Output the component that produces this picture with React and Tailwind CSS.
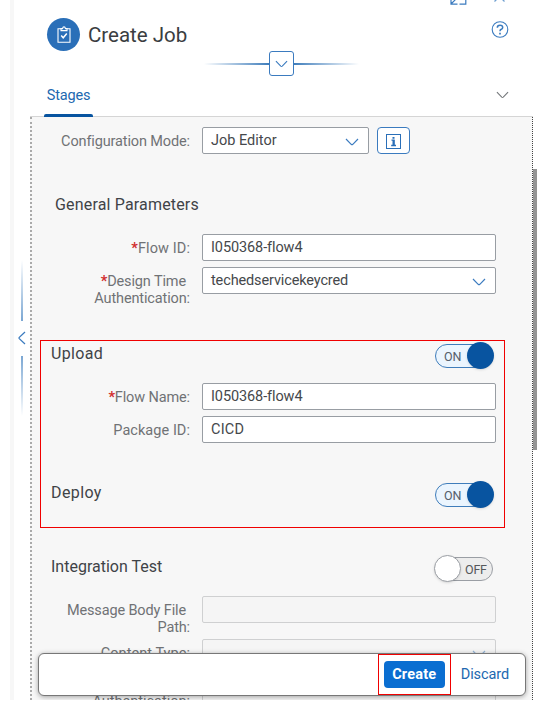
import React from "react";

function Chevron({ className = "" }) {
  return (
    <svg viewBox="0 0 14 8" fill="none" stroke="currentColor" strokeWidth="1.2" className={className}>
      <path d="M1 1 L6.2 6.3 Q7 7 7.8 6.3 L13 1" />
    </svg>
  );
}

function Field({ value = "", select, disabled, valueClass = "", className = "w-[294px]" }) {
  return (
    <div
      className={`flex h-[27px] shrink-0 items-center justify-between rounded-[2px] border pl-[8px] pr-[9px] ${
        disabled ? "border-[#cfd0d1] bg-[#f5f5f5]" : "border-[#989da3] bg-white"
      } ${className}`}
    >
      <span className={`whitespace-nowrap pt-[2px] text-[14.5px] leading-none text-[#45484b] ${valueClass}`}>{value}</span>
      {select && <Chevron className={`mt-[2px] h-[8px] w-[14px] ${disabled ? "text-[#93b4d6]" : "text-[#3b7bbf]"}`} />}
    </div>
  );
}

function Row({ lines, required, className = "", labelClass = "tracking-[-0.13px]", children }) {
  return (
    <div className={`flex items-start ${className}`}>
      <div className={`mr-[12px] flex w-[160px] shrink-0 flex-col items-end pt-[6px] text-[14.5px] leading-[17px] text-[#707275] ${labelClass}`}>
        {lines.map((line, i) => (
          <span key={line} className={`whitespace-nowrap ${i < lines.length - 1 ? "mr-[4px]" : ""}`}>
            {required && i === 0 && <span className="font-bold text-[#d22f2f]">*</span>}
            {line}
          </span>
        ))}
      </div>
      {children}
    </div>
  );
}

function Toggle({ on }) {
  return on ? (
    <div className="relative mr-[3px] h-[24px] w-[58px] rounded-full border border-[#3f7dbb] bg-[#ebf5fe] pl-[8px] text-[12.5px] leading-[23px] text-[#55606b]">
      ON
      <span className="absolute -right-[2px] -top-[3px] size-[27px] rounded-full bg-[#0854a0] shadow-sm" />
    </div>
  ) : (
    <div className="relative mr-[3px] h-[24px] w-[58px] rounded-full border border-[#9a9ea4] bg-[#ededed] pl-[29px] text-[12.5px] leading-[23px] tracking-[-0.2px] text-[#55585b]">
      OFF
      <span className="absolute -left-[2px] -top-[3px] size-[27px] rounded-full border border-[#9a9ea4] bg-white shadow-sm" />
    </div>
  );
}

function Section({ title, on, titleClass = "", className = "" }) {
  return (
    <div className={`flex h-[28px] items-start justify-between pl-[21px] ${className}`}>
      <h2 className={`pt-[1px] text-[16px] leading-[22px] text-[#3f4347] ${titleClass}`}>{title}</h2>
      <div className="pt-[2px]">
        <Toggle on={on} />
      </div>
    </div>
  );
}

export default function App() {
  return (
    <div className="h-[716px] w-[558px] overflow-hidden bg-white font-['Roboto',sans-serif]">
      <div className="flex h-[700px] overflow-hidden pl-[10px]">
        <div className="w-[4px] shrink-0 bg-[#f7f7f7]" />
        <div className="flex w-[16px] shrink-0 flex-col items-center pt-[260px]">
          <div className="h-[61px] w-[2px] bg-gradient-to-b from-transparent to-[#7ba7d3]" />
          <svg viewBox="0 0 8 14" className="mb-[11px] mt-[10px] h-[14px] w-[8px] text-[#3b7bbf]" fill="none" stroke="currentColor" strokeWidth="1.3">
            <path d="M7 1 L1.3 6.4 Q.8 7 1.3 7.6 L7 13" />
          </svg>
          <div className="h-[60px] w-[2px] bg-gradient-to-b from-[#7ba7d3] to-transparent" />
        </div>

        <div className="flex w-[503px] shrink-0 flex-col">
          <header className="relative flex h-[116px] shrink-0 flex-col">
            <div className="flex h-[50px] shrink-0 items-end pl-[17px]">
              <div className="mb-[-1px] flex size-[33px] items-center justify-center rounded-full bg-[#2a6fb8]">
                <svg viewBox="0 0 14 17" className="h-[17px] w-[14px]" fill="none" stroke="#fff" strokeWidth="1.1">
                  <path d="M4 2.8H1v13.4h12V2.8h-3" />
                  <path d="M4 4.6V2.6h1.6Q5.8.9 7 .9t1.4 1.7H10v2z" />
                  <path d="M4.2 9.6l2 2.2 3.6-4.2" strokeWidth="1.5" />
                </svg>
              </div>
              <h1 className="mb-[-1px] ml-[8px] text-[20.5px] leading-[32px] text-[#3a3d41]">Create Job</h1>
            </div>
            <div className="flex h-[26px] shrink-0 items-center pl-[174px]">
              <div className="mt-[1px] h-[2px] w-[65px] bg-gradient-to-r from-transparent to-[#3f7dbb]" />
              <div className="flex h-[25px] w-[25px] items-center justify-center rounded-[3px] border border-[#3b7bbf]">
                <Chevron className="mt-[1px] h-[8px] w-[13px] text-[#3b7bbf]" />
              </div>
              <div className="mt-[1px] h-[2px] w-[65px] bg-gradient-to-r from-[#3f7dbb] to-transparent" />
            </div>
            <div className="flex h-[41px] shrink-0 items-stretch justify-between pl-[14px] pr-[24px]">
              <div className="flex w-[49px] flex-col items-center justify-between">
                <span className="pt-[10px] text-[14.5px] leading-[20px] tracking-[-0.15px] text-[#2168b0]">Stages</span>
                <span className="relative z-10 h-[3px] w-full rounded-t-[2px] bg-[#0854a0]" />
              </div>
              <Chevron className="mt-[15px] h-[8px] w-[13px] text-[#75787b]" />
            </div>
            <svg className="absolute left-[420px] top-[-11px] h-[16px] w-[17px]" viewBox="0 0 17 16" fill="none" stroke="#3b7bbf" strokeWidth="1.2">
              <path d="M1 8.500V15.200H7.500M1 15L8 8M9.500 15.200H15.800V7" />
            </svg>
            <svg className="absolute left-[463px] top-[-10px] h-[12px] w-[13px]" viewBox="0 0 13 12" fill="none" stroke="#6f9fd0" strokeWidth="1.3">
              <path d="M1 1L11.500 11.500M12 1L1.500 11.500" />
            </svg>
            <svg className="absolute left-[461px] top-[21px] size-[18px]" viewBox="0 0 18 18" fill="none" stroke="#3b7bbf">
              <circle cx="9" cy="8.500" r="7.800" strokeWidth="1.1" />
              <path d="M6.300 6.700Q6.300 4.300 9 4.300T11.700 6.500Q11.700 7.700 10.300 8.300T9 10.300" strokeWidth="1.5" />
              <path d="M9 11.800V13.400" strokeWidth="1.7" />
            </svg>
          </header>

          <main className="relative h-[584px] overflow-hidden border-t border-[#d5d5d5] bg-[#f7f7f7]">
            <div className="absolute inset-y-0 left-0 w-[2px] border-l-2 border-dotted border-[#aaa]" />
            <div className="absolute inset-y-0 right-0 w-px border-l border-dotted border-[#444]" />
            <div className="flex w-[466px] flex-col pt-[10px]">
              <Row lines={["Configuration Mode:"]}>
                <Field value="Job Editor" select className="w-[167px]" />
                <div className="ml-[8px] flex h-[27px] w-[33px] items-center justify-center rounded-[4px] border border-[#3b7bbf] bg-white">
                  <svg viewBox="0 0 15 15" className="mt-[1px] size-[15px]" fill="none" stroke="#2a6fb8">
                    <rect x=".5" y=".5" width="14" height="14" />
                    <path d="M5.500 6.200H8V11M5.200 11.500H10" strokeWidth="1.3" />
                    <path d="M7.500 6V11.500M7.500 3V4.700" strokeWidth="2" />
                  </svg>
                </div>
              </Row>
              <h2 className="mt-[39px] pl-[25px] pt-[1px] text-[16px] leading-[22px] tracking-[0.17px] text-[#3f4347]">General Parameters</h2>
              <Row lines={["Flow ID:"]} required labelClass="tracking-[0.1px]" className="mt-[18px]">
                <Field value="I050368-flow4" valueClass="tracking-[-0.1px]" />
              </Row>
              <Row lines={["Design Time", "Authentication:"]} required className="mt-[6px]">
                <Field value="techedservicekeycred" valueClass="tracking-[-0.13px]" select />
              </Row>
              <Section title="Upload" on titleClass="tracking-[0.35px]" className="mt-[35px]" />
              <Row lines={["Flow Name:"]} required className="mt-[13px]">
                <Field value="I050368-flow4" valueClass="tracking-[-0.1px]" />
              </Row>
              <Row lines={["Package ID:"]} labelClass="tracking-[0.05px]" className="mt-[6px]">
                <Field value="CICD" valueClass="tracking-[0.2px]" />
              </Row>
              <Section title="Deploy" on titleClass="tracking-[0.4px]" className="mt-[38px]" />
              <Section title="Integration Test" className="mt-[46px]" />
              <Row lines={["Message Body File", "Path:"]} className="mt-[13px]">
                <Field disabled />
              </Row>
              <Row lines={["Content Type:"]} labelClass="tracking-[0.05px]" className="mt-[3px]">
                <Field disabled select />
              </Row>
              <Row lines={["Authentication:"]} labelClass="mt-[15px]" className="mt-[6px]">
                <Field disabled className="mt-[5px] w-[294px]" />
              </Row>
            </div>
            <div className="pointer-events-none absolute left-[10px] top-[223px] h-[188px] w-[465px] border border-[#f00000]" />
            <footer className="absolute left-[8px] top-[536px] flex h-[43px] w-[488px] items-center justify-end rounded-[6px] border border-[#777] bg-white pr-[16px] shadow-[0_1px_5px_rgba(0,0,0,0.35)]">
              <div className="mr-[10px] flex h-[41px] w-[73px] items-center justify-center border border-[#f00000]">
                <button className="h-[27px] w-[61px] rounded-[4px] bg-[#0a6ed1] pt-[1px] text-[14.5px] font-bold tracking-[0.2px] text-white">Create</button>
              </div>
              <button className="text-[14.5px] tracking-[-0.1px] text-[#2168b0]">Discard</button>
            </footer>
          </main>
        </div>
        <div className="mt-[169px] h-[281px] w-[4px] shrink-0 bg-[#949494]" />
      </div>
    </div>
  );
}
